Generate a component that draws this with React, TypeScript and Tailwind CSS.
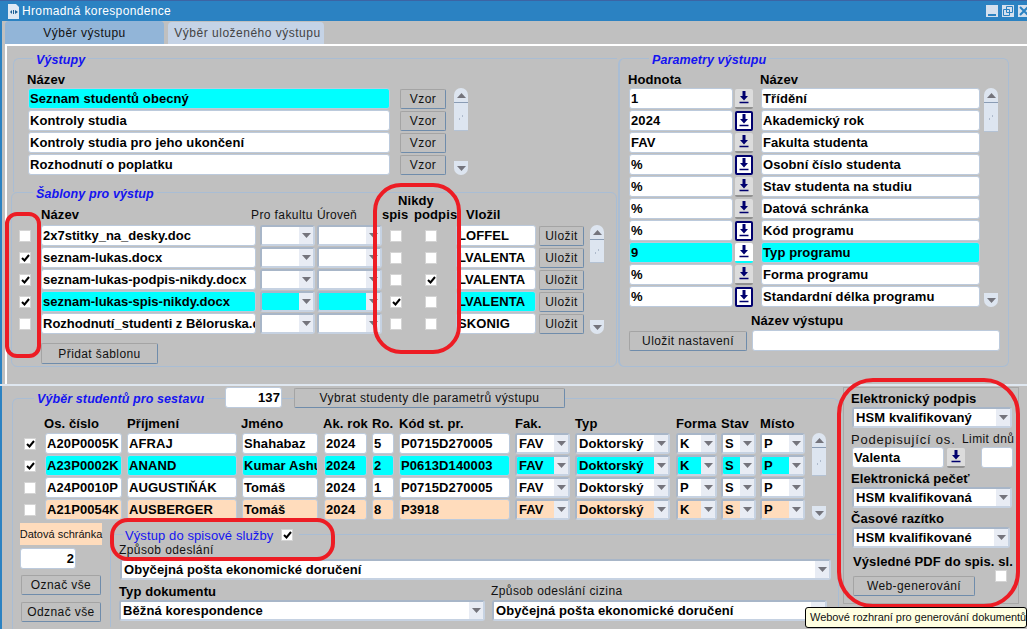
import React from "react";

const FONT = "font-['Liberation_Sans',Arial,sans-serif]";
const LINE = "border-[#a9bdd4]";
const B = "font-bold text-[13px] tracking-[0.1px] text-black";
const BT = "font-bold text-[13px] tracking-[0px] text-black";
const R = "text-[12px] tracking-[0.4px] text-[#111]";
const LEG = "relative top-[1px] italic font-bold text-[12.5px] tracking-[0.1px] text-[#1414f0] bg-[#c0c0c0] px-[3px] leading-[14px]";

function Inp({ t, w, bg = "bg-white", right = false, cls = "", tight = false }: { t?: string; w: string; bg?: string; right?: boolean; cls?: string; tight?: boolean }) {
  return (
    <div className={`${w} ${bg} h-[21px] shrink-0 border border-[#bccadc] rounded-[3px] overflow-hidden whitespace-nowrap px-[1px] leading-[19px] ${tight ? BT : B} ${right ? "text-right" : ""} ${cls}`}>
      {t}
    </div>
  );
}

function Sel({ t, w, bg = "bg-white", cls = "" }: { t?: string; w: string; bg?: string; cls?: string }) {
  return (
    <div className={`${w} h-[21px] shrink-0 flex bg-white border-2 border-[#c6d2e2] border-t-[#a8b6c8] border-l-[#a8b6c8] rounded-[3px] overflow-hidden ${cls}`}>
      <div className={`flex-1 min-w-0 ${bg} whitespace-nowrap overflow-hidden px-[2px] leading-[18px] ${B}`}>{t}</div>
      <div className="w-[14px] bg-[#e8ecf4] flex items-center justify-center shrink-0">
        <svg width="9" height="5" viewBox="0 0 9 5"><path d="M0 0h9L4.5 5z" fill="#74747c" /></svg>
      </div>
    </div>
  );
}

function Btn({ t, w, h = "h-[20px]", cls = "" }: { t: string; w: string; h?: string; cls?: string }) {
  return (
    <div className={`${w} ${h} shrink-0 flex items-center justify-center bg-[#c0c0c0] border border-[#a4a4a4] border-r-[#6f8cab] border-b-[#6f8cab] rounded-[2px] whitespace-nowrap ${R} ${cls}`}>
      {t}
    </div>
  );
}

function Check({ on = false, cls = "" }: { on?: boolean; cls?: string }) {
  return (
    <div className={`w-[12px] h-[12px] shrink-0 bg-white border border-[#d4d4d4] flex items-center justify-center ${cls}`}>
      {on && (
        <svg width="9" height="8" viewBox="0 0 9 8"><path d="M1 4l2.5 2.5L8 1" fill="none" stroke="#000" strokeWidth="2" /></svg>
      )}
    </div>
  );
}

function Lov({ kind = "n" }: { kind?: "n" | "f" | "c" }) {
  const s = kind === "f"
    ? "bg-white border-2 border-[#00006e]"
    : kind === "c"
      ? "bg-white border-b-2 border-b-[#00ffff]"
      : "bg-[#dcdcdc] border-b-2 border-b-[#909090]";
  return (
    <div className={`w-[18px] h-[20px] shrink-0 rounded-[2px] flex items-center justify-center ${s}`}>
      <svg width="10" height="13" viewBox="0 0 10 13">
        <path d="M3.5 0h3v5H9L5 9.5 1 5h2.5z" fill="#00006e" />
        <path d="M0.5 11.5h9" stroke="#00006e" strokeWidth="1.5" />
      </svg>
    </div>
  );
}

function Scroll({ h, up = "h-[43px]" }: { h: string; up?: string }) {
  return (
    <div className={`w-[14px] ${h} shrink-0 flex flex-col justify-between`}>
      <div className={`${up} flex flex-col`}>
        <div className="h-[15px] bg-[#dde5f0] rounded-t-[7px] border-b border-[#8a9cb4] flex items-center justify-center">
          <svg width="9" height="5" viewBox="0 0 9 5"><path d="M0 5h9L4.5 0z" fill="#74747c" /></svg>
        </div>
        <div className="flex-1 bg-[#dde5f0] border-b border-[#b4c2d4] flex items-center justify-center">
          <svg width="6" height="6" viewBox="0 0 6 6"><path d="M1 5h1M4 2h1" stroke="#8090a8" /></svg>
        </div>
      </div>
      <div className="h-[14px] bg-[#dde5f0] rounded-b-[7px] flex items-center justify-center">
        <svg width="9" height="5" viewBox="0 0 9 5"><path d="M0 0h9L4.5 5z" fill="#74747c" /></svg>
      </div>
    </div>
  );
}

const outputs = ["Seznam studentů obecný", "Kontroly studia", "Kontroly studia pro jeho ukončení", "Rozhodnutí o poplatku"];

const templates = [
  { n: "2x7stitky_na_desky.doc", c: false, s: false, p: false, v: "LOFFEL", a: false },
  { n: "seznam-lukas.docx", c: true, s: false, p: false, v: "LVALENTA", a: false },
  { n: "seznam-lukas-podpis-nikdy.docx", c: true, s: false, p: true, v: "LVALENTA", a: false },
  { n: "seznam-lukas-spis-nikdy.docx", c: true, s: true, p: false, v: "LVALENTA", a: true },
  { n: "Rozhodnutí_studenti z Běloruska.docx", c: false, s: false, p: false, v: "SKONIG", a: false },
];

const params: { v: string; n: string; k: "n" | "f" | "c"; a?: boolean }[] = [
  { v: "1", n: "Třídění", k: "n" },
  { v: "2024", n: "Akademický rok", k: "f" },
  { v: "FAV", n: "Fakulta studenta", k: "n" },
  { v: "%", n: "Osobní číslo studenta", k: "f" },
  { v: "%", n: "Stav studenta na studiu", k: "n" },
  { v: "%", n: "Datová schránka", k: "n" },
  { v: "%", n: "Kód programu", k: "f" },
  { v: "9", n: "Typ programu", k: "c", a: true },
  { v: "%", n: "Forma programu", k: "n" },
  { v: "%", n: "Standardní délka programu", k: "f" },
];

const students = [
  { c: true, o: "A20P0005K", p: "AFRAJ", j: "Shahabaz", r: "5", k: "P0715D270005", f: "K", bg: "bg-white" },
  { c: true, o: "A23P0002K", p: "ANAND", j: "Kumar Ashutosh", r: "2", k: "P0613D140003", f: "K", bg: "bg-[#00ffff]" },
  { c: false, o: "A24P0010P", p: "AUGUSTIŇÁK", j: "Tomáš", r: "1", k: "P0715D270005", f: "P", bg: "bg-white" },
  { c: false, o: "A21P0054K", p: "AUSBERGER", j: "Tomáš", r: "8", k: "P3918", f: "K", bg: "bg-[#ffdcbc]" },
];

function Annot({ cls }: { cls: string }) {
  return <div className={`absolute border-[4px] border-[#ed1c24] pointer-events-none ${cls}`} />;
}

export default function App() {
  return (
    <div className={`relative w-[1027px] h-[629px] overflow-hidden bg-[#c0c0c0] ${FONT}`}>
      {/* title bar */}
      <div className="h-[21px] bg-[#2b82c2] border-t border-[#3c64a4] flex items-center pl-[7px]">
        <svg width="13" height="15" viewBox="0 0 13 15">
          <path d="M1 0h8l3 3v12H1z" fill="#dfe9f4" />
          <path d="M3 8l2-2v4zM6 6h1v4H6zM8 6l3 2-3 2z" fill="#1d5f96" />
        </svg>
        <span className="ml-[2px] text-white text-[12px] tracking-[0.35px]">Hromadná korespondence</span>
        <div className="ml-auto flex items-center">
          <div className="w-[12px] h-[12px] bg-[#d4e0ee] flex items-end justify-center pb-[1px]"><div className="w-[8px] h-[2px] bg-[#2b82c2]" /></div>
          <div className="ml-[4px] w-[12px] h-[12px] bg-[#d4e0ee] flex items-center justify-center">
            <svg width="10" height="10" viewBox="0 0 10 10"><path d="M3.5.5h6v6h-6zM.5 3.5h6v6h-6z" fill="none" stroke="#2b82c2" /></svg>
          </div>
          <div className="ml-[4px] w-[9px] h-[12px] bg-[#d4e0ee] overflow-hidden">
            <svg width="12" height="12" viewBox="0 0 12 12"><path d="M2 2l8 8M10 2l-8 8" stroke="#2b82c2" strokeWidth="2" /></svg>
          </div>
        </div>
      </div>

      {/* body with blue edge */}
      <div className="border-l-[2px] border-[#2b82c2] h-[608px]">
        {/* tabs */}
        <div className="h-[23px] flex items-end pl-[3px]">
          <div className="w-[159px] h-[23px] bg-[#92b5d8] rounded-t-[4px] flex items-center justify-center text-[12px] tracking-[0.5px] text-[#111]">Výběr výstupu</div>
          <div className="w-[156px] h-[22px] ml-[4px] bg-[#c5d3e6] rounded-t-[4px] flex items-center justify-center pl-[3px] text-[12px] tracking-[0.5px] text-[#444]">Výběr uloženého výstupu</div>
        </div>

        {/* upper panel */}
        <div className="ml-[3px] h-[340px] border-t-2 border-l-2 border-white flex pt-[12px] pb-[16px]">
          {/* left */}
          <div className="w-[610px] shrink-0 pl-[4px] flex flex-col">
            <div className={`ml-[2px] h-[134px] border-l border-t rounded-tl-[6px] ${LINE} relative`}>
              <div className="ml-[19px] -mt-[7px] w-fit h-[14px] flex"><span className={LEG}>Výstupy</span></div>
              <div className={`ml-[13px] mt-[6px] h-[16px] leading-[15px] ${B}`}>Název</div>
              <div className="ml-[14px] flex gap-[8px]">
                <div className="flex flex-col gap-[1px]">
                  {outputs.map((o, i) => (
                    <div key={o} className="flex items-center">
                      <Inp t={o} w="w-[362px]" bg={i === 0 ? "bg-[#00ffff]" : "bg-white"} />
                      <Btn t="Vzor" w="w-[46px]" cls="ml-[10px]" />
                    </div>
                  ))}
                </div>
                <Scroll h="h-[87px]" />
              </div>
            </div>
            <div className={`h-[175px] border-l border-t border-b border-r rounded-[6px] ${LINE}`}>
              <div className="ml-[21px] -mt-[7px] w-fit h-[14px] flex"><span className={LEG}>Šablony pro výstup</span></div>
              <div className="h-[20px] mt-[2px] flex items-end leading-[14px] relative">
                <span className={`ml-[29px] w-[210px] ${B}`}>Název</span>
                <span className={`w-[66px] ${R}`}>Pro fakultu</span>
                <span className="w-[65px] text-[12px] tracking-[0.2px] text-[#111]">Úroveň</span>
                <span className={`w-[32px] ${B}`}>spis</span>
                <span className={`w-[52px] ${B}`}>podpis</span>
                <span className={B}>Vložil</span>
                <span className={`absolute left-[386px] top-[-8px] ${B}`}>Nikdy</span>
              </div>
              <div className="flex mt-[3px]">
                <div className="flex flex-col gap-[1px]">
                  {templates.map((t) => (
                    <div key={t.n} className="flex items-center h-[21px]">
                      <Check on={t.c} cls="ml-[7px]" />
                      <Inp tight t={t.n} w="w-[215px]" cls="ml-[10px]" bg={t.a ? "bg-[#00ffff]" : "bg-white"} />
                      <Sel w="w-[55px]" cls="ml-[4px]" bg={t.a ? "bg-[#00ffff]" : "bg-white"} />
                      <Sel w="w-[65px]" cls="ml-[2px]" bg={t.a ? "bg-[#00ffff]" : "bg-white"} />
                      <Check on={t.s} cls="ml-[8px]" />
                      <Check on={t.p} cls="ml-[23px]" />
                      <Inp t={t.v} w="w-[80px]" cls="ml-[19px]" bg={t.a ? "bg-[#00ffff]" : "bg-white"} />
                      <Btn t="Uložit" w="w-[45px]" cls="ml-[3px]" />
                    </div>
                  ))}
                </div>
                <div className="ml-[6px]"><Scroll h="h-[109px]" up="h-[38px]" /></div>
              </div>
              <Btn t="Přidat šablonu" w="w-[117px]" h="h-[21px]" cls="ml-[29px] mt-[9px]" />
            </div>
          </div>

          {/* right */}
          <div className={`ml-[1px] w-[391px] h-[309px] shrink-0 border border-l-2 ${LINE} rounded-[6px]`}>
            <div className="ml-[29px] -mt-[7px] w-fit h-[14px] flex"><span className={LEG}>Parametry výstupu</span></div>
            <div className="flex h-[16px] mt-[6px] leading-[15px]">
              <span className={`ml-[8px] w-[132px] ${B}`}>Hodnota</span>
              <span className={B}>Název</span>
            </div>
            <div className="flex">
              <div className="flex flex-col gap-[1px] ml-[9px]">
                {params.map((p) => (
                  <div key={p.n} className="flex items-center h-[21px]">
                    <Inp t={p.v} w="w-[104px]" bg={p.a ? "bg-[#00ffff]" : "bg-white"} />
                    <div className="ml-[2px]"><Lov kind={p.k} /></div>
                    <Inp t={p.n} w="w-[219px]" cls="ml-[8px]" bg={p.a ? "bg-[#00ffff]" : "bg-white"} />
                  </div>
                ))}
              </div>
              <div className="ml-[4px]"><Scroll h="h-[219px]" up="h-[44px]" /></div>
            </div>
            <div className={`ml-[131px] mt-[7px] h-[14px] leading-[14px] ${B}`}>Název výstupu</div>
            <div className="flex items-center ml-[9px] mt-[2px]">
              <Btn t="Uložit nastavení" w="w-[118px]" />
              <Inp w="w-[248px]" cls="ml-[5px]" />
            </div>
          </div>
        </div>

        {/* lower panel */}
        <div className="ml-[-2px] border-t-2 border-[#dfe7f0] flex h-[245px]">
          <div className={`ml-[12px] mt-[12px] w-[827px] h-[231px] border-l border-t border-r rounded-t-[6px] ${LINE} shrink-0`}>
            <div className="h-[21px] -mt-[12px] flex items-center">
              <div className="ml-[21px] w-[191px] flex"><span className={LEG}>Výběr studentů pro sestavu</span></div>
              <Inp t="137" w="w-[57px]" right />
              <Btn t="Vybrat studenty dle parametrů výstupu" w="w-[271px]" cls="ml-[12px]" />
            </div>
            <div className={`h-[24px] flex items-end leading-[16px] ${B}`}>
              <span className="ml-[31px] w-[83px]">Os. číslo</span>
              <span className="w-[114px]">Příjmení</span>
              <span className="w-[82px]">Jméno</span>
              <span className="w-[49px]">Ak. rok</span>
              <span className="w-[27px]">Ro.</span>
              <span className="w-[116px]">Kód st. pr.</span>
              <span className="w-[60px]">Fak.</span>
              <span className="w-[101px]">Typ</span>
              <span className="w-[45px]">Forma</span>
              <span className="w-[39px]">Stav</span>
              <span>Místo</span>
            </div>
            <div className="flex mt-[1px]">
              <div className="flex flex-col gap-[1px]">
                {students.map((s) => (
                  <div key={s.o} className="flex items-center h-[21px]">
                    <Check on={s.c} cls="ml-[11px]" />
                    <Inp t={s.o} w="w-[77px]" cls="ml-[9px]" bg={s.bg} />
                    <Inp t={s.p} w="w-[110px]" cls="ml-[5px]" bg={s.bg} />
                    <Inp t={s.j} w="w-[76px]" cls="ml-[5px]" bg={s.bg} />
                    <Inp t="2024" w="w-[43px]" cls="ml-[6px]" bg={s.bg} />
                    <Inp t={s.r} w="w-[22px]" cls="ml-[5px]" bg={s.bg} />
                    <Inp t={s.k} w="w-[111px]" cls="ml-[5px]" bg={s.bg} />
                    <Sel t="FAV" w="w-[55px]" cls="ml-[5px]" bg={s.bg} />
                    <Sel t="Doktorský" w="w-[95px]" cls="ml-[5px]" bg={s.bg} />
                    <Sel t={s.f} w="w-[41px]" cls="ml-[6px]" bg={s.bg} />
                    <Sel t="S" w="w-[35px]" cls="ml-[4px]" bg={s.bg} />
                    <Sel t="P" w="w-[45px]" cls="ml-[4px]" bg={s.bg} />
                  </div>
                ))}
              </div>
              <div className="ml-[7px]"><Scroll h="h-[87px]" /></div>
            </div>
            <div className="flex mt-[3px]">
              <div className="ml-[7px] w-[82px] shrink-0 flex flex-col">
                <div className="h-[22px] bg-[#ffdcbc] flex items-center justify-center text-[11px] text-[#111] whitespace-nowrap">Datová schránka</div>
                <Inp t="2" w="w-[56px]" right cls="mt-[3px]" />
                <Btn t="Označ vše" w="w-[80px]" cls="mt-[6px] ml-[1px]" />
                <Btn t="Odznač vše" w="w-[80px]" cls="mt-[7px] ml-[1px]" />
              </div>
              <div className={`ml-[8px] mt-[11px] flex-1 mr-[2px] h-[93px] border-l border-t rounded-tl-[6px] ${LINE}`}>
                <div className="-mt-[8px] ml-[12px] w-fit flex items-center h-[16px] bg-[#c0c0c0] px-[2px]">
                  <span className="text-[13px] tracking-[0.1px] text-[#1414f0] pt-[1px]">Výstup do spisové služby</span>
                  <Check on cls="ml-[8px]" />
                  <span className="w-[4px]" />
                </div>
                <div className={`ml-[8px] h-[14px] leading-[14px] ${R}`}>Způsob odeslání</div>
                <Sel t="Obyčejná pošta ekonomické doručení" w="w-[711px]" cls="ml-[9px] mt-[2px]" />
                <div className="flex mt-[2px] h-[17px] items-end leading-[15px]">
                  <span className={`ml-[8px] w-[372px] ${B}`}>Typ dokumentu</span>
                  <span className={R}>Způsob odeslání cizina</span>
                </div>
                <div className="flex mt-[1px]">
                  <Sel t="Běžná korespondence" w="w-[366px]" cls="ml-[8px]" />
                  <Sel t="Obyčejná pošta ekonomické doručení" w="w-[335px]" cls="ml-[7px]" />
                </div>
              </div>
            </div>
          </div>

          <div className="ml-[4px] mt-[1px] w-[176px] h-[217px] shrink-0 border border-[#a8a8a8] pl-[7px] flex flex-col">
            <div className={`h-[15px] mt-[3px] leading-[15px] ${B}`}>Elektronický podpis</div>
            <Sel t="HSM kvalifikovaný" w="w-[160px]" cls="ml-[1px] mt-[1px]" />
            <div className="flex h-[15px] mt-[4px] leading-[15px] text-[#111]">
              <span className="w-[111px] text-[13px] tracking-[0.8px] whitespace-nowrap">Podepisující os.</span>
              <span className="text-[12px] tracking-[0.4px] whitespace-nowrap">Limit dnů</span>
            </div>
            <div className="flex items-center ml-[1px]">
              <Inp t="Valenta" w="w-[92px]" />
              <div className="ml-[3px]"><Lov kind="n" /></div>
              <Inp w="w-[32px]" cls="ml-[16px]" />
            </div>
            <div className={`h-[15px] mt-[3px] leading-[15px] ${B}`}>Elektronická pečeť</div>
            <Sel t="HSM kvalifikovaná" w="w-[160px]" cls="ml-[1px] mt-[1px]" />
            <div className={`h-[15px] mt-[3px] leading-[15px] ${B}`}>Časové razítko</div>
            <Sel t="HSM kvalifikované" w="w-[158px]" cls="ml-[1px] mt-[1px]" />
            <div className={`h-[15px] mt-[6px] ml-[2px] leading-[15px] whitespace-nowrap ${B}`}>Výsledné PDF do spis. sl.</div>
            <div className="flex items-start ml-[2px]">
              <Btn t="Web-generování" w="w-[122px]" cls="mt-[7px]" />
              <Check cls="ml-[20px] mt-[1px]" />
            </div>
          </div>
        </div>
      </div>

      {/* hand-drawn red annotations */}
      <Annot cls="left-[5px] top-[212px] w-[36px] h-[146px] rounded-[12px]" />
      <Annot cls="left-[373px] top-[183px] w-[88px] h-[171px] rounded-[28px]" />
      <Annot cls="left-[110px] top-[518px] w-[225px] h-[43px] rounded-[18px]" />
      <Annot cls="left-[837px] top-[378px] w-[183px] h-[230px] rounded-[36px]" />

      {/* tooltip */}
      <div className="absolute left-[805px] top-[607px] w-[222px] h-[21px] bg-[#ffffe1] border border-black rounded-[3px] flex items-center pl-[4px] text-[11px] tracking-[-0.05px] text-[#111] whitespace-nowrap overflow-hidden">
        Webové rozhraní pro generování dokumentů
      </div>
    </div>
  );
}
